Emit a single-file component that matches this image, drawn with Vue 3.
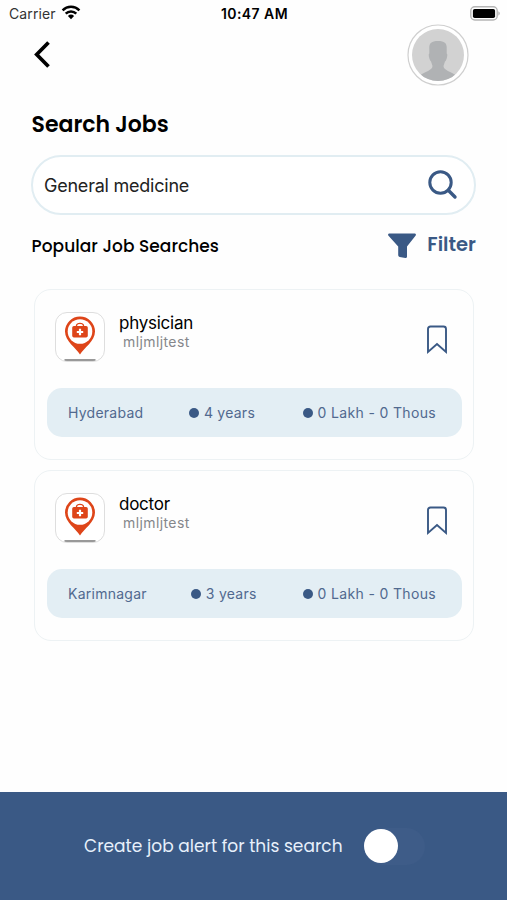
<script setup>
import { ref } from 'vue'

const query = ref('General medicine')
const alertOn = ref(false)
const jobs = [
  { id: 1, title: 'physician', company: 'mljmljtest', city: 'Hyderabad', years: '4 years', pay: '0 Lakh - 0 Thous' },
  { id: 2, title: 'doctor', company: 'mljmljtest', city: 'Karimnagar', years: '3 years', pay: '0 Lakh - 0 Thous' },
]
</script>

<template>
  <main class="screen">
    <div class="status">
      <div class="carrier">
        <span class="carrier-name">Carrier</span>
        <svg class="wifi" width="20" height="15" viewBox="0 0 20 15">
          <path d="M1.6 5.3a12 12 0 0 1 16.8 0M4.7 8.6a7.6 7.6 0 0 1 10.6 0" fill="none" stroke="#000" stroke-width="2.5" />
          <path d="M10 14.2 6.9 11a4.5 4.5 0 0 1 6.2 0z" />
        </svg>
      </div>
      <span class="time">10:47 AM</span>
      <div class="power">
        <svg width="31" height="15" viewBox="0 0 31 15">
          <rect x=".8" y=".8" width="26.4" height="13.2" rx="4" fill="#fff" stroke="#b5b5b5" stroke-width="1.4" />
          <rect x="2.9" y="3" width="22.2" height="9" rx="1.8" />
          <path d="M28.5 5.2q2.3 2.2 0 4.500z" fill="#999" />
        </svg>
      </div>
    </div>

    <header class="header">
      <svg class="back" width="18" height="30" viewBox="0 0 18 30">
        <path d="M15.500 2.500 3.700 14.500 15.500 26.500" fill="none" stroke="#000" stroke-width="3.700" />
      </svg>
      <svg class="avatar" width="62" height="62" viewBox="0 0 62 62">
        <defs><clipPath id="face"><circle cx="31" cy="31" r="26" /></clipPath></defs>
        <circle cx="31" cy="31" r="30" fill="#fff" stroke="#cfcfcf" stroke-width="1.200" />
        <circle cx="31" cy="31" r="26" fill="#d2d2d2" />
        <path clip-path="url(#face)" fill="#b0b2b4" d="M22.300 24.500C22 19.500 24 17 31 17s9 2.500 8.700 7.500v5q1.200.6 0 5-.8 2.500-1.700 3L36.500 42c0 4.500 7 5 14.500 10.500V60H11v-7.500C18.500 47 25.500 46.500 25.500 42L24 37.500q-1.100-.8-1.600-3-1.300-4.300-.1-5z" />
      </svg>
    </header>

    <h1 class="title"><span>Search Jobs</span></h1>

    <div class="search">
      <span class="query">{{ query }}</span>
      <svg width="30" height="30" viewBox="0 0 30 30" fill="none" stroke="#3a5985">
        <circle cx="12.500" cy="12.500" r="10.700" stroke-width="3" />
        <path d="m20.300 20.300 6.700 6.700" stroke-width="3.400" stroke-linecap="round" />
      </svg>
    </div>

    <div class="subhead">
      <h2 class="popular">Popular Job Searches</h2>
      <div class="filter">
        <svg width="30" height="27" viewBox="0 0 30 27" fill="#3a5985">
          <path d="M2 1.500h26q1.600.9.500 2.200L20 14.500v10.200q-.2 1.500-1.600 1.300l-5.800-1.100q-1.400-.4-1.400-1.700v-8.700L1.500 3.700Q.4 2.400 2 1.500z" />
        </svg>
        <span class="filter-label">Filter</span>
      </div>
    </div>

    <section class="jobs">
      <article v-for="job in jobs" :key="job.id" class="card">
        <div class="card-top">
          <div class="logo">
            <svg width="48" height="48" viewBox="0 0 48 48">
              <path d="M24 41.500C20 35 9 28 9 18.500a15 15 0 0 1 30 0C39 28 28 35 24 41.500z" fill="#de4519" />
              <circle cx="24" cy="18.500" r="12.300" fill="#fff" />
              <path d="M20.500 13.500v-1.200q.4-2 3.500-2t3.500 2v1.200" fill="none" stroke="#de4519" stroke-width="1.300" />
              <rect x="16.200" y="13" width="15.600" height="11.500" rx="1.700" fill="#de4519" />
              <path d="M24 15.800v6.400M20.800 19h6.400" stroke="#fff" stroke-width="2.200" />
              <path d="M8.500 47h31" stroke="#777" stroke-width="1.400" />
            </svg>
          </div>
          <div class="names">
            <span class="job-title">{{ job.title }}</span>
            <span class="company">{{ job.company }}</span>
          </div>
          <svg class="bookmark" width="22" height="30" viewBox="0 0 22 30">
            <path d="M2 27V4q0-2.500 2.500-2.500h13q2.500 0 2.500 2.500v23l-9-8z" fill="none" stroke="#3a5985" stroke-width="1.900" />
          </svg>
        </div>
        <div class="facts">
          <span class="city">{{ job.city }}</span>
          <span class="fact years"><i class="dot" />{{ job.years }}</span>
          <span class="fact pay"><i class="dot" />{{ job.pay }}</span>
        </div>
      </article>
    </section>

    <footer class="alert">
      <span class="alert-label">Create job alert for this search</span>
      <span class="toggle" role="switch" :aria-checked="alertOn"><i class="knob" /></span>
    </footer>
  </main>
</template>

<style>
body { margin: 0; background: #fefefe; }
</style>

<style scoped>
* { box-sizing: border-box; }
svg { display: block; flex: none; }
span { white-space: nowrap; }
.screen { width: 507px; height: 900px; display: flex; flex-direction: column; background: #fefefe; color: #000; font-family: Poppins, Inter, "Liberation Sans", sans-serif; overflow: hidden; }
.status { height: 24px; padding: 3px 7px 0 9px; display: grid; grid-template-columns: 1fr auto 1fr; align-items: center; font-family: Inter, sans-serif; font-size: 14px; line-height: 20px; }
.carrier { display: flex; align-items: center; gap: 5px; }
.carrier-name { color: #333; letter-spacing: .1px; }
.wifi { margin-top: -3px; }
.time { font-weight: 600; letter-spacing: .45px; }
.power { display: flex; justify-content: flex-end; margin-right: -1px; }
.power svg { margin-top: -1px; }
.header { height: 76px; padding: 0 38px 0 33px; display: flex; justify-content: space-between; align-items: flex-start; }
.back { margin-top: 16px; }
.title { height: 55px; margin: 0; padding: 9px 31.500px 0; font-size: 22px; line-height: 32px; font-weight: 600; }
.search { height: 60px; margin: 0 31px 0 31px; padding: 0 16px 0 11px; border: 2px solid #e1edf2; border-radius: 30px; display: flex; align-items: center; justify-content: space-between; background: #fff; }
.query { font-family: Inter, sans-serif; font-size: 18px; letter-spacing: -.23px; color: #222; }
.subhead { height: 74px; padding: 16px 31px 0 31.500px; display: flex; justify-content: space-between; align-items: flex-start; }
.popular { margin: 3px 0 0; font-size: 17px; line-height: 24px; font-weight: 500; letter-spacing: .05px; white-space: nowrap; }
.filter { display: flex; align-items: flex-start; gap: 10px; color: #3a5985; }
.filter svg { margin-top: 1px; }
.filter-label { font-size: 19.500px; line-height: 27px; font-weight: 600; }
.jobs { padding: 0 33px 0 34px; display: flex; flex-direction: column; gap: 10px; font-family: Inter, sans-serif; }
.card { height: 171px; padding: 22px 11px 0 12px; border: 1.500px solid #edf2f4; border-radius: 17px; background: #fefefe; }
.card-top { height: 76px; padding: 0 14px 0 8px; display: flex; align-items: flex-start; }
.logo { width: 50px; height: 50px; border: 1px solid #dedede; border-radius: 12px; overflow: hidden; background: #fff; }
.names { margin-left: 14px; flex: 1; display: flex; flex-direction: column; }
.job-title { margin-top: 1px; font-size: 17px; line-height: 20px; letter-spacing: -.25px; }
.company { margin-left: 4px; font-size: 14px; line-height: 18px; color: #85878b; letter-spacing: .4px; }
.bookmark { margin-top: 13px; }
.facts { height: 49px; padding: 0 26px 0 21px; display: flex; align-items: center; justify-content: space-between; border-radius: 15px; background: #e3eef4; color: #51698f; font-size: 14px; letter-spacing: .25px; }
.fact { display: flex; align-items: center; gap: 5px; }
.years { margin-right: 2px; }
.pay { letter-spacing: .34px; }
.dot { width: 10px; height: 10px; border-radius: 50%; background: #3a5985; }
.alert { height: 108px; margin-top: auto; padding-left: 84px; display: flex; align-items: center; gap: 21px; background: #3a5985; color: #e7f0fb; }
.alert-label { font-size: 17px; letter-spacing: .03px; }
.toggle { width: 61px; height: 37px; border-radius: 19px; display: flex; align-items: center; background: #3e5c88; }
.knob { width: 34px; height: 34px; border-radius: 50%; background: #fff; }
</style>
